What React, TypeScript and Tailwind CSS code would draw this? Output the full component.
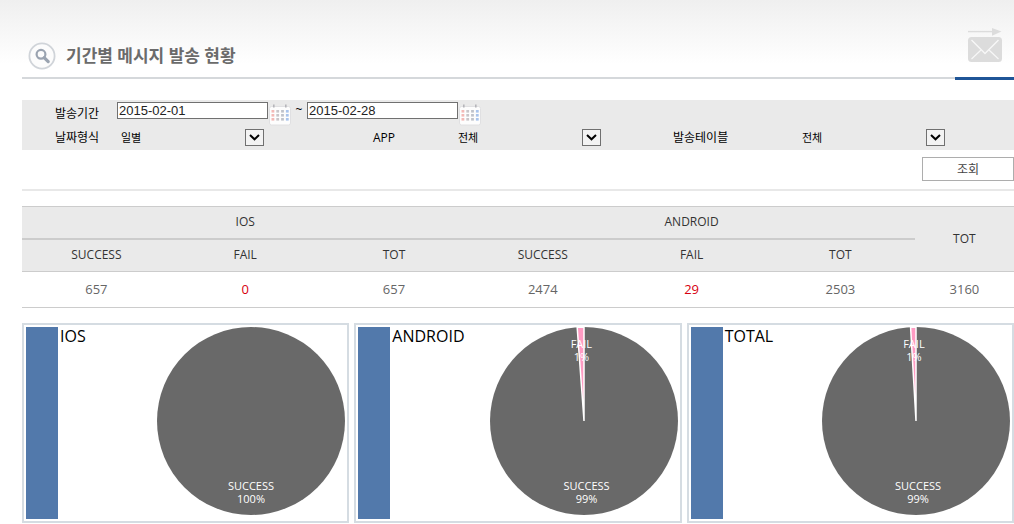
type Slice = { ok: number; fail: number };

const filters = [
  { id: "dateType", label: "날짜형식", value: "일별", pad: "pl-[33px]" },
  { id: "app", label: "APP", value: "전체", pad: "" },
  { id: "sendTable", label: "발송테이블", value: "전체", pad: "" },
];

const charts = [
  { title: "IOS", data: { ok: 657, fail: 0 } },
  { title: "ANDROID", data: { ok: 2474, fail: 29 } },
  { title: "TOTAL", data: { ok: 3131, fail: 29 } },
];

const SearchIcon = () => (
  <svg className="w-7 h-7 shrink-0" viewBox="0 0 28 28" fill="none">
    <circle cx="14" cy="14" r="12.6" fill="#fcfcfc" stroke="#d0d4d9" strokeWidth="1.8" />
    <circle cx="13" cy="12.3" r="4.4" stroke="#9aa3b0" strokeWidth="2.2" />
    <path d="M16.2 15.6l4 4" stroke="#9aa3b0" strokeWidth="3.2" strokeLinecap="round" />
  </svg>
);

const MailIcon = () => (
  <svg className="w-9 h-9" viewBox="0 0 36 36" fill="none">
    <path d="M1 3.6h26" stroke="#dcdcdc" strokeWidth="1.4" />
    <path d="M25 0l9.5 3.6L25 7.8z" fill="#dcdcdc" />
    <rect x="1" y="9" width="34" height="25" rx="3.5" fill="#dcdcdc" />
    <path d="M4.5 12l13.5 13.5L31.5 12" stroke="#f7f7f7" strokeWidth="1.4" />
    <path d="M4.5 31l9.5-9M31.5 31L22 22" stroke="#f7f7f7" strokeWidth="1.2" />
  </svg>
);

const dotColors = ["#f3b9b6", "#c9c5c9", "#bfc3cb", "#a9c4ec"];

const CalendarIcon = () => (
  <svg className="w-[22px] h-[22px]" viewBox="0 0 22 22">
    <rect x="0.5" y="2.5" width="21" height="18.5" rx="2" fill="#fdfdfd" stroke="#e0e0e2" />
    <path d="M4.8 0.5v3M16.8 0.5v3" stroke="#b5b5ba" strokeWidth="1.6" />
    {[6, 10, 14].map((y) =>
      dotColors.map((color, i) => (
        <rect key={`${y}-${i}`} x={2.5 + i * 4.8} y={y} width="2.8" height="2.6" fill={color} />
      ))
    )}
  </svg>
);

const DateField = ({ label, value }: { label: string; value: string }) => (
  <div className="flex">
    <input
      type="text"
      aria-label={label}
      defaultValue={value}
      className="w-[151px] h-[17px] mt-0.5 pl-px border border-[#707070] bg-white text-[13px] leading-none text-[#222] font-['Liberation_Sans',sans-serif]"
    />
    <button type="button" aria-label={`${label} 달력`} className="ml-px mt-1">
      <CalendarIcon />
    </button>
  </div>
);

const SelectField = ({ id, value }: { id: string; value: string }) => (
  <div className="relative w-[147px] h-[18px]">
    <select id={id} className="w-full h-full appearance-none pl-1 pt-0.5 bg-transparent text-[11px] text-black">
      <option>{value}</option>
    </select>
    <svg className="absolute right-0 top-0 w-[19px] h-[17px] pointer-events-none" viewBox="0 0 19 17">
      <rect x="0.5" y="0.5" width="18" height="16" fill="#f3f3f3" stroke="#707070" />
      <path d="M5 6l4.5 4.3L14 6" fill="none" stroke="#000" strokeWidth="2" />
    </svg>
  </div>
);

const Pie = ({ ok, fail }: Slice) => {
  const ratio = fail / (ok + fail);
  const angle = ratio * Math.PI * 2;
  const x = 94 - 94 * Math.sin(angle);
  const y = 94 - 94 * Math.cos(angle);
  const percent = Math.round(ratio * 100);
  // labels sit on the bisector of their slice
  const shift = 72 * Math.sin(angle / 2);
  return (
    <svg
      className="w-[188px] h-[188px] shrink-0 font-['Open_Sans','Noto_Sans_CJK_KR',sans-serif]"
      viewBox="0 0 188 188"
      fontSize="11"
      textAnchor="middle"
    >
      <circle cx="94" cy="94" r="94" fill="#696969" />
      {fail > 0 && (
        <path d={`M94 94L94 0A94 94 0 0 0 ${x} ${y}Z`} fill="#ff9bc3" stroke="#fff" strokeWidth="1.5" />
      )}
      {fail > 0 && (
        <g fill="#fff">
          <text x={94 - shift} y="21">FAIL</text>
          <text x={94 - shift} y="34">{percent}%</text>
        </g>
      )}
      <g fill="#fff">
        <text x={94 + shift} y="163">SUCCESS</text>
        <text x={94 + shift} y="176">{100 - percent}%</text>
      </g>
    </svg>
  );
};

const ChartCard = ({ title, data }: { title: string; data: Slice }) => (
  <div className="flex flex-1 p-0.5 border-2 border-[#d5dce2] bg-white">
    <div className="w-8 h-48 shrink-0 bg-[#5279ab]" />
    <h2 className="flex-1 pl-0.5 text-base leading-[18px] text-black">{title}</h2>
    <Pie {...data} />
  </div>
);

const ResultTable = () => (
  <table className="w-full mt-[15px] table-fixed border-collapse text-center text-xs text-[#333]">
    <colgroup>
      <col className="w-[15%]" />
      <col className="w-[15%]" />
      <col className="w-[15%]" />
      <col className="w-[15%]" />
      <col className="w-[15%]" />
      <col className="w-[15%]" />
      <col className="w-[10%]" />
    </colgroup>
    <thead className="bg-[#eaeaea] border-y border-[#ccc]">
      <tr className="h-8">
        <th colSpan={3} className="font-normal border-b-2 border-[#ccc]">IOS</th>
        <th colSpan={3} className="font-normal border-b-2 border-[#ccc]">ANDROID</th>
        <th rowSpan={2} className="font-normal">TOT</th>
      </tr>
      <tr className="h-[33px]">
        <th className="font-normal">SUCCESS</th>
        <th className="font-normal">FAIL</th>
        <th className="font-normal">TOT</th>
        <th className="font-normal">SUCCESS</th>
        <th className="font-normal">FAIL</th>
        <th className="font-normal">TOT</th>
      </tr>
    </thead>
    <tbody>
      <tr className="h-9 text-[13px] text-[#666] border-b border-[#ccc]">
        <td>657</td>
        <td className="text-[#d7000f]">0</td>
        <td>657</td>
        <td>2474</td>
        <td className="text-[#d7000f]">29</td>
        <td>2503</td>
        <td>3160</td>
      </tr>
    </tbody>
  </table>
);

export default function App() {
  return (
    <main className="pl-[22px] bg-linear-to-b from-[#efefef] to-white to-[64px] text-black font-['Open_Sans','Noto_Sans_CJK_KR',sans-serif]">
      <header className="flex h-20 items-stretch justify-between">
        <div className="flex flex-1 mb-px pl-1.5 pt-[34px] items-center gap-2.5 border-b-2 border-[#d5d8db]">
          <SearchIcon />
          <h1 className="text-[17px] leading-6 font-bold text-[#6b6b6b]">기간별 메시지 발송 현황</h1>
        </div>
        <div className="flex w-[59px] pt-7 pl-3 border-b-3 border-[#1f5597]">
          <MailIcon />
        </div>
      </header>

      <form>
        <div className="grid grid-cols-[95px_256fr_81px_219fr_125px_216fr] auto-rows-[25px] mt-5 bg-[#eaeaea] text-xs">
          <span className="pl-[33px] pt-0.5 self-center">발송기간</span>
          <div className="col-span-5 flex">
            <DateField label="시작일" value="2015-02-01" />
            <span className="w-4 pt-0.5 text-center">~</span>
            <DateField label="종료일" value="2015-02-28" />
          </div>
          {filters.map((f) => (
            <div key={f.id} className="contents">
              <label htmlFor={f.id} className={`self-center ${f.pad}`}>
                {f.label}
              </label>
              <div className="flex items-center">
                <SelectField id={f.id} value={f.value} />
              </div>
            </div>
          ))}
        </div>
        <div className="flex justify-end pt-[7px] pb-2 border-b-2 border-[#e8e8e8]">
          <button type="button" className="w-[92px] h-6 pt-px border border-[#adadad] bg-white text-xs text-[#444]">
            조회
          </button>
        </div>
      </form>

      <ResultTable />

      <section className="flex gap-[5px] mt-[15px]">
        {charts.map((c) => (
          <ChartCard key={c.title} {...c} />
        ))}
      </section>
    </main>
  );
}
